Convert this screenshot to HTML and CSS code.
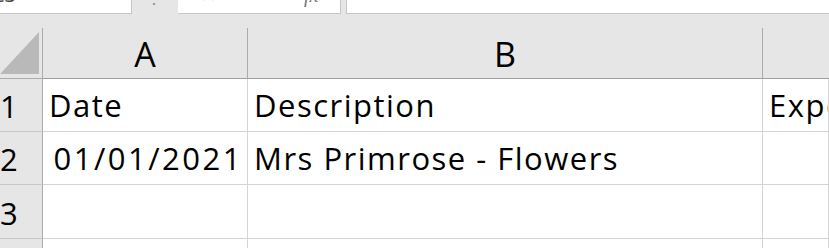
FILE: index.html
```html
<!DOCTYPE html>
<html lang="en">
<head>
    <meta charset="UTF-8">
    <meta name="viewport" content="width=device-width, initial-scale=1.0">
    <title>Expenses - Sheet1</title>
    <link rel="stylesheet" href="styles.css">
</head>
<body>
    <div class="toolbar">
        <div class="name-box"><span class="cut">C3</span></div>
        <div class="grip"><span class="cut">&#8942;</span></div>
        <div class="fx-buttons">
            <span class="cut btn-cancel">&#10005;</span>
            <span class="cut btn-enter">&#10003;</span>
            <span class="cut btn-fx">fx</span>
        </div>
        <div class="formula-bar"></div>
    </div>

    <div class="sheet">
        <div class="corner"><div class="corner-tri"></div></div>
        <div class="col-head">A</div>
        <div class="col-head">B</div>
        <div class="col-head last"></div>

        <div class="row-head">1</div>
        <div class="cell">Date</div>
        <div class="cell">Description</div>
        <div class="cell">Expenses</div>

        <div class="row-head">2</div>
        <div class="cell num">01/01/2021</div>
        <div class="cell">Mrs Primrose - Flowers</div>
        <div class="cell"></div>

        <div class="row-head">3</div>
        <div class="cell"></div>
        <div class="cell"></div>
        <div class="cell"></div>

        <!-- row 4 is only a sliver at the bottom of the window -->
        <div class="row-head"></div>
        <div class="cell"></div>
        <div class="cell"></div>
        <div class="cell"></div>
    </div>
</body>
</html>
```

FILE: styles.css
```css
body {
    margin: 0;
    width: 829px;
    height: 248px;
    overflow: hidden;
    background-color: #e6e6e6;
    font-family: "Open Sans", "Noto Sans", sans-serif;
}
.toolbar {
    display: flex;
    height: 14px;
    padding-bottom: 14px;
}
.toolbar > div {
    box-sizing: border-box;
    height: 14px;
    overflow: hidden;
    position: relative;
}
.name-box {
    width: 132px;
    background-color: #fff;
    border-right: 1px solid #c6c6c6;
    border-bottom: 1px solid #c6c6c6;
}
.grip {
    width: 46px;
    color: #9a9a9a;
}
.fx-buttons {
    width: 163px;
    background-color: #fff;
    border-right: 1px solid #c6c6c6;
    border-bottom: 1px solid #c6c6c6;
    color: #a0a0a0;
}
.formula-bar {
    flex: 1;
    margin-left: 5px;
    background-color: #fff;
    border-left: 1px solid #c6c6c6;
    border-bottom: 1px solid #c6c6c6;
}
.cut {
    position: absolute;
    bottom: 8px;
    font-size: 20px;
    line-height: 20px;
}
.name-box .cut {
    left: -8px;
    color: #444;
}
.grip .cut {
    left: 12px;
}
.btn-cancel { left: 22px; }
.btn-enter { left: 72px; }
.btn-fx {
    left: 126px;
    font-family: "Liberation Serif", serif;
    font-style: italic;
    color: #777;
}

.sheet {
    display: grid;
    grid-template-columns: 43px 205px 515px 1fr;
    grid-template-rows: 51px 53px 53px 54px 10px;
}
.sheet > div {
    box-sizing: border-box;
}
.corner {
    border-right: 1px solid #ababab;
    border-bottom: 1px solid #ababab;
    padding-top: 4px;
}
.corner-tri {
    width: 39px;
    height: 42px;
    background-color: #b9b9b9;
    clip-path: polygon(100% 0, 100% 100%, 0 100%);
}
.col-head {
    display: flex;
    justify-content: center;
    align-items: flex-end;
    padding-bottom: 2px;
    border-right: 1px solid #ababab;
    border-bottom: 1px solid #9f9f9f;
    font-size: 34px;
    line-height: 44px;
    color: #000;
}
.col-head.last {
    border-right: none;
}
.row-head {
    display: flex;
    align-items: flex-end;
    padding-left: 0;
    padding-bottom: 3px;
    border-right: 1px solid #ababab;
    border-bottom: 1px solid #c8c8c8;
    font-size: 31px;
    line-height: 44px;
    color: #000;
}
.cell {
    display: flex;
    align-items: flex-end;
    padding-left: 6px;
    padding-bottom: 4px;
    background-color: #fff;
    border-right: 1px solid #d4d4d4;
    border-bottom: 1px solid #d4d4d4;
    font-size: 31px;
    line-height: 44px;
    letter-spacing: 1.5px;
    color: #000;
    white-space: nowrap;
    overflow: hidden;
}
.cell.num {
    justify-content: flex-end;
    padding-left: 0;
    padding-right: 4px;
    letter-spacing: 2.5px;
}
```
